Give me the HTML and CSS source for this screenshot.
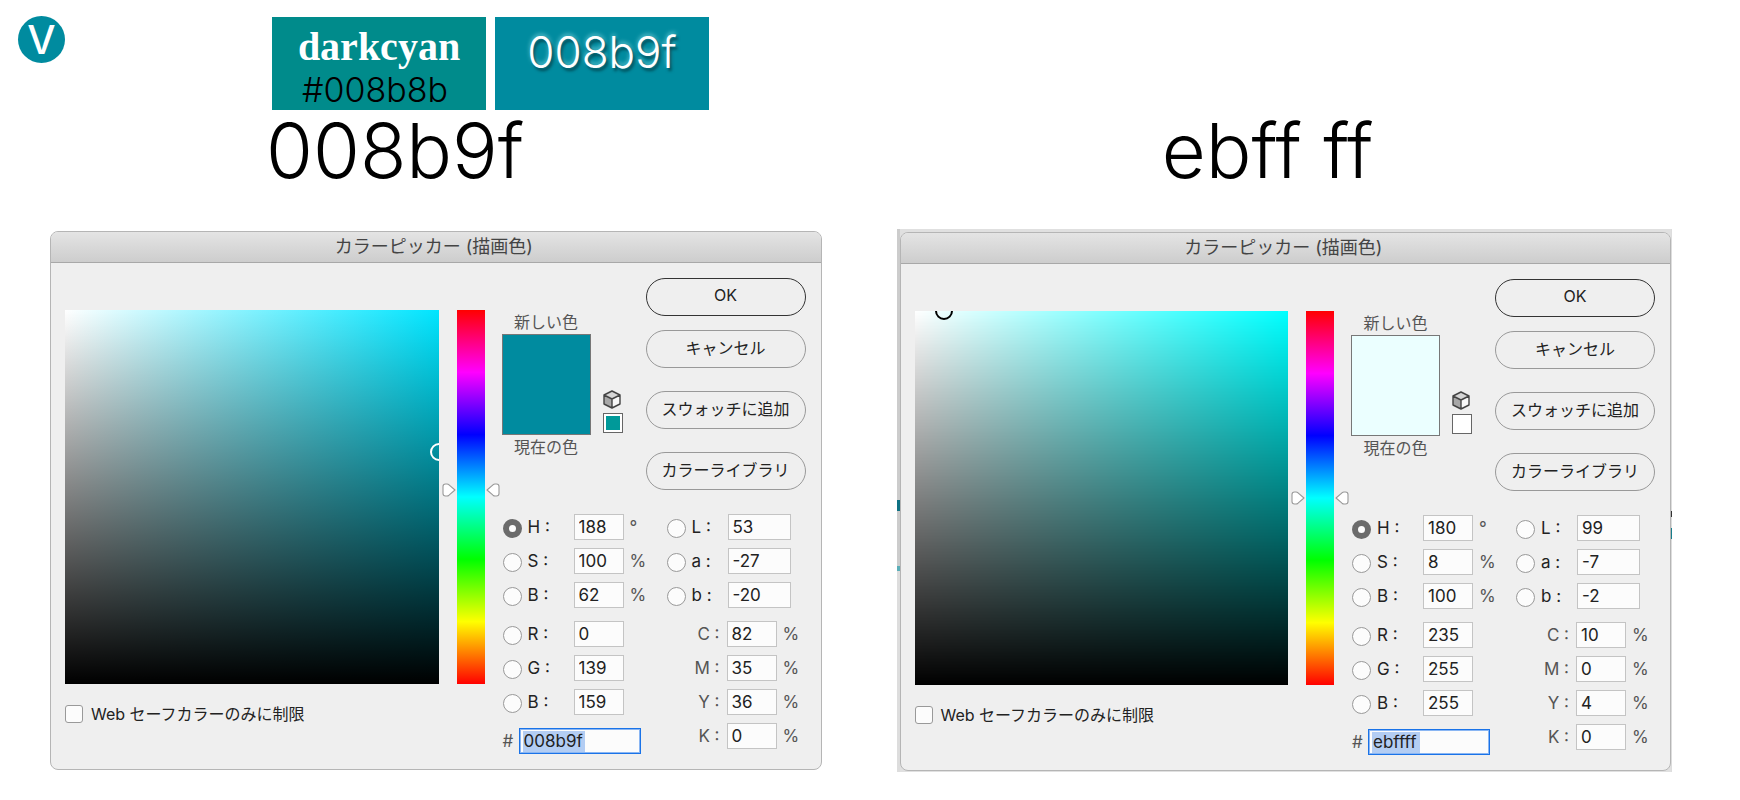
FILE: index.html
```html
<!DOCTYPE html>
<html lang="ja">
<head>
    <meta charset="utf-8">
    <title>008b9f / ebffff</title>
    <link rel="stylesheet" href="styles.css">
</head>
<body>

<svg class="defs" width="0" height="0" aria-hidden="true">
    <symbol id="cube" viewBox="0 0 18 19">
        <path d="M9 1 L17 5 L9 9 L1 5 Z" fill="#d6d6d6"/>
        <path d="M1 5 L9 9 L9 18 L1 14 Z" fill="#a8a8a8"/>
        <path d="M17 5 L9 9 L9 18 L17 14 Z" fill="#f8f8f8"/>
        <path d="M9 1 L17 5 L17 14 L9 18 L1 14 L1 5 Z M1 5 L9 9 L17 5 M9 9 L9 18" fill="none" stroke="#444" stroke-width="1.4" stroke-linejoin="round"/>
    </symbol>
    <symbol id="marker" viewBox="0 0 14 14">
        <path d="M1 3.5 Q1 1 3.5 1 H5 Q6 1 7 1.8 L13 7 L7 12.2 Q6 13 5 13 H3.5 Q1 13 1 10.5 Z" fill="#fff" stroke="#999" stroke-width="1.1" stroke-linejoin="round"/>
    </symbol>
</svg>

<header>
    <div class="logo">V</div>
    <div class="card named">
        <div class="name">darkcyan</div>
        <div class="code">#008b8b</div>
    </div>
    <div class="card custom">008b9f</div>
</header>

<main>
    <!-- 008b9f -->
    <section>
        <h1 class="first">008b9f</h1>
        <div class="frame">
        <form class="dialog">
            <h2>カラーピッカー (描画色)</h2>
            <div class="content">
                <div class="left">
                    <div class="field cyan188"><span class="ring white"></span></div>
                    <label class="websafe"><input type="checkbox"> Web セーフカラーのみに制限</label>
                </div>
                <div class="hue">
                    <input type="range" min="0" max="360" value="188" aria-label="色相">
                    <svg class="marker h188"><use href="#marker"/></svg>
                    <svg class="marker end h188"><use href="#marker"/></svg>
                </div>
                <div class="right">
                    <div class="top">
                        <div class="preview">
                            <span>新しい色</span>
                            <div class="box teal"></div>
                            <span>現在の色</span>
                        </div>
                        <div class="safe">
                            <svg class="cube"><use href="#cube"/></svg>
                            <div class="mini green"></div>
                        </div>
                        <div class="buttons">
                            <button type="button" class="ok">OK</button>
                            <button type="button">キャンセル</button>
                            <button type="button" class="apart">スウォッチに追加</button>
                            <button type="button" class="apart">カラーライブラリ</button>
                        </div>
                    </div>
                    <div class="values">
                        <div class="rows">
                            <div class="row"><input type="radio" name="m1" id="h1" checked><label for="h1">H :</label><input class="num" type="text" value="188" aria-label="H"><span>°</span></div>
                            <div class="row"><input type="radio" name="m1" id="s1"><label for="s1">S :</label><input class="num" type="text" value="100" aria-label="S"><span>%</span></div>
                            <div class="row"><input type="radio" name="m1" id="v1"><label for="v1">B :</label><input class="num" type="text" value="62" aria-label="B"><span>%</span></div>
                            <div class="row next"><input type="radio" name="m1" id="r1"><label for="r1">R :</label><input class="num" type="text" value="0" aria-label="R"></div>
                            <div class="row"><input type="radio" name="m1" id="g1"><label for="g1">G :</label><input class="num" type="text" value="139" aria-label="G"></div>
                            <div class="row"><input type="radio" name="m1" id="b1"><label for="b1">B :</label><input class="num" type="text" value="159" aria-label="B"></div>
                            <div class="row next hexrow"><label for="x1">#</label><input class="hex sel6" type="text" id="x1" value="008b9f"></div>
                        </div>
                        <div class="rows lab">
                            <div class="row"><input type="radio" name="m1" id="l1"><label for="l1">L :</label><input class="num wide" type="text" value="53" aria-label="L"></div>
                            <div class="row"><input type="radio" name="m1" id="a1"><label for="a1">a :</label><input class="num wide" type="text" value="-27" aria-label="a"></div>
                            <div class="row"><input type="radio" name="m1" id="lb1"><label for="lb1">b :</label><input class="num wide" type="text" value="-20" aria-label="b"></div>
                            <div class="row ink next"><label for="c1">C :</label><input class="num" type="text" id="c1" value="82"><span>%</span></div>
                            <div class="row ink"><label for="mg1">M :</label><input class="num" type="text" id="mg1" value="35"><span>%</span></div>
                            <div class="row ink"><label for="y1">Y :</label><input class="num" type="text" id="y1" value="36"><span>%</span></div>
                            <div class="row ink"><label for="k1">K :</label><input class="num" type="text" id="k1" value="0"><span>%</span></div>
                        </div>
                    </div>
                </div>
            </div>
        </form>
        </div>
    </section>

    <!-- ebffff -->
    <section>
        <h1 class="second">ebff ff</h1>
        <div class="frame grey">
        <form class="dialog">
            <h2>カラーピッカー (描画色)</h2>
            <div class="content">
                <div class="left">
                    <div class="field cyan180"><span class="ring black"></span></div>
                    <label class="websafe"><input type="checkbox"> Web セーフカラーのみに制限</label>
                </div>
                <div class="hue">
                    <input type="range" min="0" max="360" value="180" aria-label="色相">
                    <svg class="marker h180"><use href="#marker"/></svg>
                    <svg class="marker end h180"><use href="#marker"/></svg>
                </div>
                <div class="right">
                    <div class="top">
                        <div class="preview">
                            <span>新しい色</span>
                            <div class="box pale"></div>
                            <span>現在の色</span>
                        </div>
                        <div class="safe">
                            <svg class="cube"><use href="#cube"/></svg>
                            <div class="mini"></div>
                        </div>
                        <div class="buttons">
                            <button type="button" class="ok">OK</button>
                            <button type="button">キャンセル</button>
                            <button type="button" class="apart">スウォッチに追加</button>
                            <button type="button" class="apart">カラーライブラリ</button>
                        </div>
                    </div>
                    <div class="values">
                        <div class="rows">
                            <div class="row"><input type="radio" name="m2" id="h2" checked><label for="h2">H :</label><input class="num" type="text" value="180" aria-label="H"><span>°</span></div>
                            <div class="row"><input type="radio" name="m2" id="s2"><label for="s2">S :</label><input class="num" type="text" value="8" aria-label="S"><span>%</span></div>
                            <div class="row"><input type="radio" name="m2" id="v2"><label for="v2">B :</label><input class="num" type="text" value="100" aria-label="B"><span>%</span></div>
                            <div class="row next"><input type="radio" name="m2" id="r2"><label for="r2">R :</label><input class="num" type="text" value="235" aria-label="R"></div>
                            <div class="row"><input type="radio" name="m2" id="g2"><label for="g2">G :</label><input class="num" type="text" value="255" aria-label="G"></div>
                            <div class="row"><input type="radio" name="m2" id="b2"><label for="b2">B :</label><input class="num" type="text" value="255" aria-label="B"></div>
                            <div class="row next hexrow"><label for="x2">#</label><input class="hex sel4" type="text" id="x2" value="ebffff"></div>
                        </div>
                        <div class="rows lab">
                            <div class="row"><input type="radio" name="m2" id="l2"><label for="l2">L :</label><input class="num wide" type="text" value="99" aria-label="L"></div>
                            <div class="row"><input type="radio" name="m2" id="a2"><label for="a2">a :</label><input class="num wide" type="text" value="-7" aria-label="a"></div>
                            <div class="row"><input type="radio" name="m2" id="lb2"><label for="lb2">b :</label><input class="num wide" type="text" value="-2" aria-label="b"></div>
                            <div class="row ink next"><label for="c2">C :</label><input class="num" type="text" id="c2" value="10"><span>%</span></div>
                            <div class="row ink"><label for="mg2">M :</label><input class="num" type="text" id="mg2" value="0"><span>%</span></div>
                            <div class="row ink"><label for="y2">Y :</label><input class="num" type="text" id="y2" value="4"><span>%</span></div>
                            <div class="row ink"><label for="k2">K :</label><input class="num" type="text" id="k2" value="0"><span>%</span></div>
                        </div>
                    </div>
                </div>
            </div>
        </form>
        </div>
    </section>
</main>

</body>
</html>
```
FILE: styles.css
```css
* {
    box-sizing: border-box;
}

body {
    margin: 0;
    background: #fff;
    color: #222;
    font-family: Inter, "Noto Sans CJK JP", sans-serif;
    font-size: 16px;
    line-height: 24px;
}

.defs {
    display: block;
}

/* logo and the two colour cards */
header {
    display: flex;
    align-items: flex-start;
    padding: 16px 18px 0;
}

.logo {
    width: 47px;
    height: 47px;
    margin-right: 207px;
    background: #008b9f;
    border-radius: 50%;
    color: #fff;
    font-size: 40px;
    font-weight: 500;
    line-height: 48px;
    text-align: center;
}

.card {
    width: 214px;
    height: 93px;
    margin: 1px 9px 0 0;
    text-align: center;
}

.named {
    background: #008b8b;
}

.name {
    padding-top: 8px;
    color: #fff;
    font: bold 40px/44px "Liberation Serif", serif;
}

.code {
    padding-right: 8px;
    color: #000;
    font-size: 34px;
    font-weight: 300;
    line-height: 42px;
}

.custom {
    background: #008b9f;
    color: #fff;
    font-size: 44px;
    font-weight: 300;
    line-height: 70px;
    text-shadow: 2px 3px 3px #024d58, 0 -2px 4px #5fc3d0;
}

/* pickers */
main {
    display: flex;
    gap: 78px;
    padding: 0 69px 0 50px;
}

section {
    flex: 1;
}

h1 {
    margin: 0;
    padding-top: 2px;
    height: 119px;
    color: #000;
    font-size: 76px;
    font-weight: 300;
    line-height: 76px;
}

.first {
    padding-left: 28%;
}

.second {
    padding-left: 34%;
}

.frame {
    padding-top: 2px;
}

/* bits of the window behind show at both edges */
.grey {
    margin: 0 -1px 0 -3px;
    padding: 3px 1px 1px 3px;
    background:
        linear-gradient(#ccc 50%, #0f7183 50%, #0f7183 52%, #ccc 52%, #ccc 62%, #5aaeb8 62%, #5aaeb8 63%, #ddd 63%) left / 3px 100% no-repeat,
        linear-gradient(#ddd 52%, #333 52%, #333 53%, #ddd 53%, #ddd 55%, #177e8c 55%, #177e8c 57%, #ddd 57%) right / 1px 100% no-repeat,
        #e0e0e0;
}

.dialog {
    background: #efefef;
    border: 1px solid #b5b5b5;
    border-radius: 8px;
    overflow: hidden;
}

h2 {
    margin: 0;
    padding-right: 4px;
    background: linear-gradient(#e4e4e4, #cdcdcd);
    border-bottom: 1px solid #a8a8a8;
    color: #444;
    font-size: 18px;
    font-weight: 400;
    line-height: 30px;
    text-align: center;
}

.content {
    display: flex;
    padding: 15px 15px 15px 14px;
}

.left {
    flex: 1;
    padding-top: 32px;
}

.field {
    position: relative;
    height: 374px;
    overflow: hidden;
}

.cyan188 {
    background: linear-gradient(to top, #000, transparent), linear-gradient(to right, #fff, #00e5ff);
}

.cyan180 {
    background: linear-gradient(to top, #000, transparent), linear-gradient(to right, #fff, #00ffff);
}

.ring {
    position: absolute;
    width: 18px;
    height: 18px;
    margin: -9px;
    border: 2px solid;
    border-radius: 50%;
}

.white {
    top: 38%;
    left: 100%;
    border-color: #fff;
}

.black {
    top: 0;
    left: 8%;
    border-color: #000;
}

.websafe {
    display: flex;
    align-items: center;
    gap: 8px;
    margin-top: 18px;
}

input[type="checkbox"] {
    appearance: none;
    width: 18px;
    height: 18px;
    margin: 0;
    background: #fcfcfc;
    border: 1px solid #999;
    border-radius: 3px;
}

.hue {
    position: relative;
    width: 28px;
    height: 374px;
    margin: 32px 17px 0 18px;
}

.hue input {
    appearance: none;
    display: block;
    writing-mode: vertical-lr;
    direction: rtl;
    width: 28px;
    height: 374px;
    margin: 0;
    background: linear-gradient(#f00, #f0f, #00f, #0ff, #0f0, #ff0, #f00);
}

.hue input::-webkit-slider-thumb {
    appearance: none;
    width: 28px;
    height: 1px;
    background: transparent;
}

.marker {
    position: absolute;
    left: -15px;
    width: 14px;
    height: 14px;
    margin-top: -7px;
}

.end {
    left: auto;
    right: -15px;
    transform: rotate(180deg);
}

.h188 {
    top: 48%;
}

.h180 {
    top: 50%;
}

.right {
    width: 304px;
}

.top {
    display: flex;
}

.preview {
    width: 89px;
    padding-top: 32px;
    color: #555;
    text-align: center;
}

.box {
    height: 101px;
    border: 1px solid #777;
}

.teal {
    background: #008b9f;
}

.pale {
    background: #ebffff;
}

.safe {
    width: 20px;
    margin-left: 12px;
    padding-top: 112px;
}

.cube {
    display: block;
    width: 18px;
    height: 19px;
    margin-bottom: 4px;
}

.mini {
    width: 20px;
    height: 20px;
    background: #fff;
    border: 1px solid #666;
}

.green {
    background: #009999;
    box-shadow: inset 0 0 0 2px #fff;
}

.buttons {
    width: 160px;
    margin-left: auto;
}

button {
    display: block;
    width: 100%;
    height: 38px;
    margin-bottom: 14px;
    padding: 0 0 4px;
    background: none;
    border: 1px solid #999;
    border-radius: 19px;
    color: #222;
    font-family: inherit;
    font-size: 16px;
}

.ok {
    border-color: #333;
}

.apart {
    margin: 23px 0 0;
}

.values {
    display: flex;
    padding-top: 24px;
}

.rows {
    display: flex;
    flex-direction: column;
    gap: 8px;
    width: 164px;
    font-size: 17px;
}

.lab {
    width: 140px;
}

.row {
    display: flex;
    align-items: center;
    height: 26px;
}

.next {
    margin-top: 5px;
}

.row span {
    margin-left: 6px;
    color: #555;
}

.row label {
    width: 46px;
    margin-left: 6px;
}

.lab .row label {
    width: 36px;
}

.lab .ink label {
    width: 54px;
    margin: 0 7px 0 0;
    color: #555;
    text-align: right;
}

input[type="radio"] {
    appearance: none;
    flex: none;
    width: 19px;
    height: 19px;
    margin: 2px 0 0 1px;
    background: #fcfcfc;
    border: 1px solid #999;
    border-radius: 50%;
}

input[type="radio"]:checked {
    border: 6px solid #6b6b6b;
}

.num {
    width: 50px;
    height: 26px;
    padding: 0 4px;
    background: #fcfcfc;
    border: 1px solid #c4c4c4;
    color: #222;
    font-family: inherit;
    font-size: 17px;
}

.wide {
    width: 63px;
}

.hexrow label {
    width: 16px;
    margin-left: 1px;
    color: #555;
}

.hex {
    width: 122px;
    height: 26px;
    padding: 0 4px;
    border: 1px solid #1a73e8;
    outline: 1px solid #8ab6f3;
    outline-offset: -2px;
    color: #222;
    font-family: inherit;
    font-size: 17px;
}

/* selected text */
.sel6 {
    background: linear-gradient(#b3cdf3, #b3cdf3) 3px center / 62px 21px no-repeat #fcfcfc;
}

.sel4 {
    background: linear-gradient(#b3cdf3, #b3cdf3) 3px center / 48px 21px no-repeat #fcfcfc;
}
```
